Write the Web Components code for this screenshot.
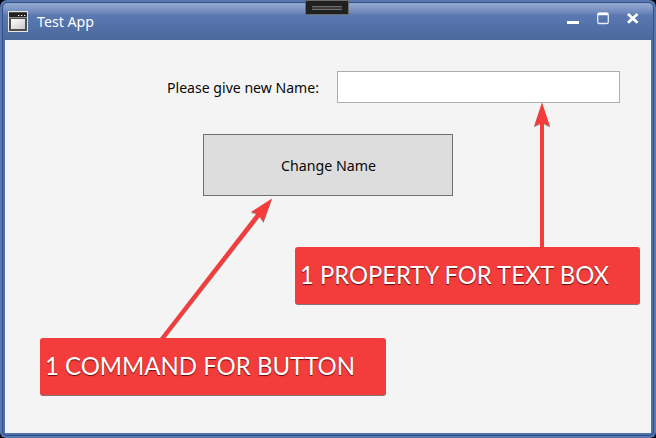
<!DOCTYPE html>
<html lang="en">
<head>
<meta charset="utf-8">
<title>Test App</title>
<style>
html, body { margin: 0; width: 656px; height: 438px; overflow: hidden; background: #05070c; }
</style>
</head>
<body>
<app-window>
  <title-bar slot="title"></title-bar>
  <name-form></name-form>
  <pointer-arrows></pointer-arrows>
  <call-out style="left:295px;top:247px;--w:345px" label="1 PROPERTY FOR TEXT BOX" span="309"></call-out>
  <call-out style="left:40px;top:338px;--w:346px" label="1 COMMAND FOR BUTTON" span="310"></call-out>
</app-window>
<script>
const define = (name, render) => customElements.define(name, class extends HTMLElement {
  constructor() { super(); this.attachShadow({ mode: 'open' }); }
  connectedCallback() { this.shadowRoot.innerHTML = render(this); }
});

// One line of text set to an exact advance width.
define('fit-text', el => `
  <style>
    :host { display: block; flex: none; }
    svg { display: block; overflow: visible; }
    text { fill: currentColor; }
  </style>
  <svg width="${el.getAttribute('span')}" height="20"><text x="0" y="15" textLength="${el.getAttribute('span')}" lengthAdjust="spacingAndGlyphs">${el.getAttribute('label')}</text></svg>`);

define('app-window', () => `
  <style>
    :host { display: block; box-sizing: border-box; position: relative; width: 656px; height: 438px;
      border-radius: 7px 7px 6px 6px; padding: 2px; background: #5777ae; overflow: hidden; }
    .edge { box-sizing: border-box; height: 434px; border: 1px solid #2f5088; border-radius: 6px 6px 4px 4px;
      padding: 0 2px 2px; background: #5071a8; display: flex; flex-direction: column; }
    .frame-title { margin: 0 -2px; height: 37px; flex: none; }
    .body { flex: 1; background: #f4f4f4; }
  </style>
  <div class="edge">
    <div class="frame-title"><slot name="title"></slot></div>
    <div class="body"><slot></slot></div>
  </div>`);

define('title-bar', () => `
  <style>
    :host { display: flex; box-sizing: border-box; height: 37px; padding: 0 14px 0 5px; align-items: flex-start; border-radius: 5px 5px 0 0;
      background: linear-gradient(#92a8d0 0, #869dc9 4px, #6c86b9 10px, #5b78b0 12px, #5775ae 18px, #4a6899 37px);
      color: #fff; font: 15px "Noto Sans", "Open Sans", sans-serif; }
    svg { display: block; flex: none; }
    .app { margin-top: 8px; }
    fit-text { margin: 9px 0 0 9px; }
    .buttons { margin: 9px 0 0 auto; }
    .grip { position: absolute; left: 305px; top: 0; }
  </style>
  <svg class="app" width="20" height="21" viewBox="0 0 20 21">
    <defs><linearGradient id="g" x1="0" y1="0" x2="1" y2="1"><stop stop-color="#fff"/><stop offset="1" stop-color="#c9c9c9"/></linearGradient></defs>
    <rect x=".5" y=".5" width="19" height="20" fill="#4e4e4e" stroke="#e8e8e8"/>
    <rect x="1" y="2" width="18" height="4" fill="#222"/>
    <path d="M1 6.5h18" stroke="#8a8a8a"/>
    <path d="M10 4.5h1.3M13 4.5h1.3M16 4.5h1.3" stroke="#fff" stroke-width="1.2"/>
    <rect x="3" y="8" width="14" height="10" fill="url(#g)"/>
  </svg>
  <fit-text label="Test App" span="57"></fit-text>
  <svg class="buttons" width="73" height="14" viewBox="566 12 73 14">
    <path d="M567 22.5h12" stroke="#fff" stroke-width="3"/>
    <rect x="597.7" y="13.2" width="10.6" height="10.3" rx="1.6" fill="none" stroke="#e8edf6" stroke-width="1.3"/>
    <path d="M598 14h10" stroke="#fff" stroke-width="2.4"/>
    <path d="M628 14l9.5 8.8M637.5 14L628 22.8" stroke="#fff" stroke-width="2.8"/>
  </svg>
  <svg class="grip" width="44" height="15"><rect x=".5" y=".5" width="43" height="14" fill="#202020" stroke="#6a6a66"/>
    <path d="M7 6.5h30M7 9.5h30" stroke="#6e6e6e"/><path d="M7 8h30" stroke="#3a3a3a" stroke-width="2"/></svg>`);

define('name-form', () => `
  <style>
    :host { display: flex; flex-direction: column; padding-top: 31px; color: #080808; font: 15px "Noto Sans", "Open Sans", sans-serif; }
    .row { display: flex; align-items: center; padding-left: 162px; gap: 18px; }
    .input { box-sizing: border-box; width: 283px; height: 32px; border: 1px solid #abadb3; background: #fff; }
    .row fit-text { margin-top: 2px; }
    .button { box-sizing: border-box; width: 250px; height: 62px; margin: 31px 0 0 198px; border: 1px solid #707070;
      background: #ddd; display: flex; align-items: center; justify-content: center; }
    .button fit-text { margin: 1px 0 0; }
  </style>
  <div class="row"><fit-text label="Please give new Name:" span="152"></fit-text><div class="input"></div></div>
  <div class="button"><fit-text label="Change Name" span="95"></fit-text></div>`);

define('pointer-arrows', () => `
  <style>
    :host { position: absolute; left: 0; top: 0; filter: drop-shadow(0 1px .5px rgba(60,60,60,.5)); }
    svg { display: block; }
  </style>
  <svg width="656" height="438" fill="#f33c3c">
    <path d="M542 102.5L550 126.5L544 123.5V249H540V123.5L534 126.5Z"/>
    <path d="M272 198.5L263.5 222L259.7 216.5L163.5 340H158.5L256.5 213.5L251 212Z"/>
  </svg>`);

define('call-out', el => `
  <style>
    :host { position: absolute; box-sizing: border-box; width: var(--w); height: 57px; padding: 22px 0 0 5px;
      border-radius: 3px; background: #f33c3c; box-shadow: 0 1px 0 #8a7272;
      color: #fff; font: 25.5px Lato, "Open Sans", sans-serif; text-shadow: 0 1px 1px rgba(60,0,0,.8); }
  </style>
  <fit-text label="${el.getAttribute('label')}" span="${el.getAttribute('span')}"></fit-text>`);
</script>
</body>
</html>
